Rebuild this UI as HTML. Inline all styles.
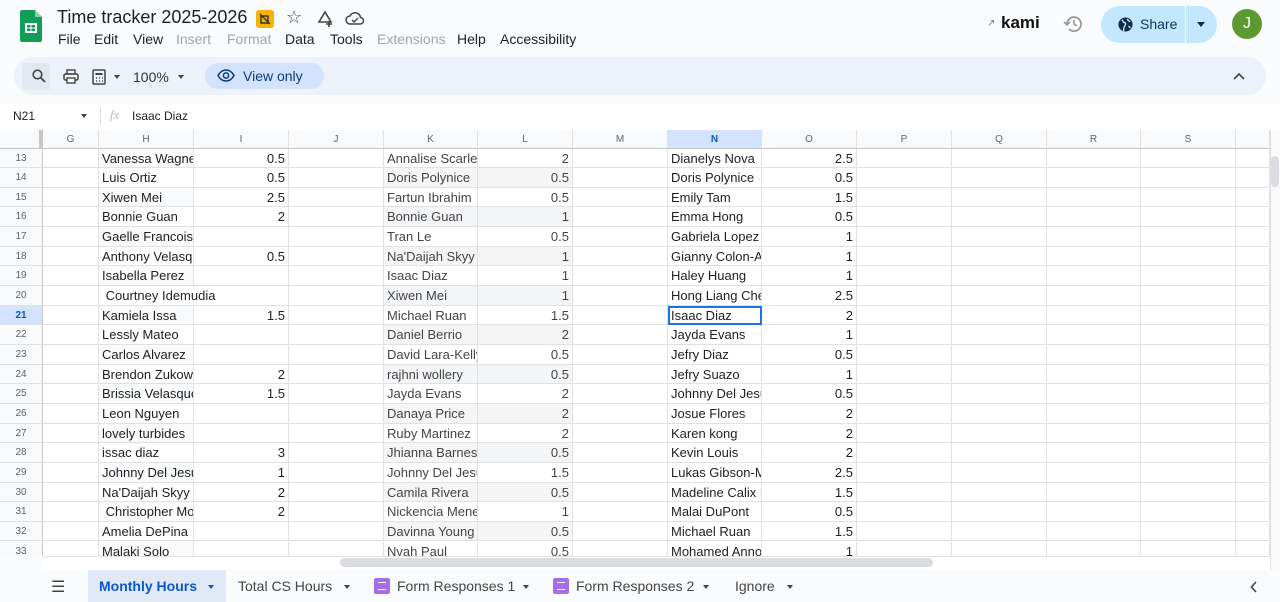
<!DOCTYPE html>
<html><head><meta charset="utf-8"><style>
*{box-sizing:border-box;margin:0;padding:0}
body{width:1280px;height:602px;overflow:hidden;background:#f9fbfd;font-family:"Liberation Sans",Arial,sans-serif;position:relative;color:#1f1f1f}
.abs{position:absolute}
.menu span{position:absolute;top:31px;font-size:14px;color:#1f1f1f}
.menu span.dis{color:#a0a3a8}
.grid{position:absolute;left:0;top:130px;width:1270px;height:426px;background:#fff;overflow:hidden}
.hdr{position:absolute;top:0;height:19px;border-bottom:1px solid #c7c7c7;border-right:1px solid #e1e1e1;font-size:10px;color:#5f6368;text-align:center;line-height:19px;background:#f8f9fa}
.row{position:absolute;left:0;height:19.65px;width:1270px}
.c{position:absolute;top:0;height:100%;border-right:1px solid #e1e1e1;border-bottom:1px solid #e1e1e1;font-size:13px;line-height:19px;padding:0 3px;white-space:nowrap;overflow:hidden;color:#1f1f1f}
.r{text-align:right}
.rn{left:0;width:43px;background:#f8f9fa;color:#5f6368;font-size:10px;text-align:center;border-right:1px solid #c7c7c7}
.k{color:#444}
.sh{background:#f4f5f7}
.sh2{background:#f9fafb}
.tab{position:absolute;top:570px;height:32px;font-size:14px;line-height:32px;color:#444}
</style></head><body>
<!-- logo -->
<svg class="abs" style="left:20px;top:10px" width="22" height="32" viewBox="0 0 22 32"><path d="M2 0h13l7 7v23a2 2 0 0 1-2 2H2a2 2 0 0 1-2-2V2a2 2 0 0 1 2-2z" fill="#0f9d58"/><path d="M15 0l7 7h-7z" fill="#87ceac"/><rect x="5" y="13" width="12" height="10" fill="#fff"/><rect x="7" y="15" width="3.5" height="2.5" fill="#0f9d58"/><rect x="11.5" y="15" width="3.5" height="2.5" fill="#0f9d58"/><rect x="7" y="18.5" width="3.5" height="2.5" fill="#0f9d58"/><rect x="11.5" y="18.5" width="3.5" height="2.5" fill="#0f9d58"/></svg>
<div class="abs" style="left:57px;top:7px;font-size:18px;color:#1f1f1f">Time tracker 2025-2026</div>
<div class="abs" style="left:256px;top:10px;width:18px;height:18px;background:#f6b400;border-radius:3px"></div>
<svg class="abs" style="left:259px;top:13px" width="12" height="12" viewBox="0 0 12 12"><path d="M1 1l10 10M2 3h7v7H2z" stroke="#333" stroke-width="1.4" fill="none"/></svg>
<div class="abs" style="left:286px;top:7px;font-size:18px;color:#444">☆</div>
<svg class="abs" style="left:316px;top:10px" width="18" height="18" viewBox="0 0 18 18"><path d="M9 2l6 10H3z" fill="none" stroke="#444" stroke-width="1.6"/><path d="M13 11v6M10 14h6" stroke="#444" stroke-width="1.6"/></svg>
<svg class="abs" style="left:345px;top:11px" width="20" height="14" viewBox="0 0 20 14"><path d="M5 13a4 4 0 0 1 0-8 5.5 5.5 0 0 1 10.5 1.5A3.2 3.2 0 0 1 15 13z" fill="none" stroke="#444" stroke-width="1.5"/><path d="M7 9l2 2 4-4" fill="none" stroke="#444" stroke-width="1.4"/></svg>
<div class="menu"><span style="left:58px">File</span><span style="left:94px">Edit</span><span style="left:133px">View</span><span class="dis" style="left:176px">Insert</span><span class="dis" style="left:227px">Format</span><span style="left:285px">Data</span><span style="left:330px">Tools</span><span class="dis" style="left:377px">Extensions</span><span style="left:457px">Help</span><span style="left:500px">Accessibility</span></div>
<!-- right -->
<div class="abs" style="left:987px;top:18px;font-size:10px;color:#777">↗</div>
<div class="abs" style="left:1001px;top:13px;font-size:17px;font-weight:bold;color:#111">kami</div>
<svg class="abs" style="left:1063px;top:13px" width="22" height="22" viewBox="0 0 22 22"><path d="M4 11a7 7 0 1 1 2 5" fill="none" stroke="#999" stroke-width="1.8"/><path d="M1 9l3 3 3-3" fill="none" stroke="#999" stroke-width="1.6"/><path d="M11 7v4l3 2" fill="none" stroke="#999" stroke-width="1.6"/></svg>
<div class="abs" style="left:1101px;top:6px;width:116px;height:37px;border-radius:19px;background:#c2e7ff"></div>
<div class="abs" style="left:1185px;top:6px;width:1px;height:37px;background:#fff"></div>
<svg class="abs" style="left:1118px;top:17px" width="15" height="15" viewBox="0 0 16 16"><circle cx="8" cy="8" r="7.5" fill="#0b2d4a"/><path d="M4 3c2 1 1 3 3 3s1 3 0 4-1 3-1 5M10 2c0 2 2 2 3 3M11 10c1 0 2 1 2 2" stroke="#c2e7ff" stroke-width="1.5" fill="none"/></svg>
<div class="abs" style="left:1140px;top:16px;font-size:14px;color:#0b3557;font-weight:500">Share</div>
<div class="abs" style="left:1197px;top:22px;border:4px solid transparent;border-top:5px solid #0b2d4a"></div>
<div class="abs" style="left:1232px;top:9px;width:30px;height:30px;border-radius:50%;background:#5c9930;color:#fff;font-size:16px;text-align:center;line-height:30px">J</div>
<!-- toolbar -->
<div class="abs" style="left:14px;top:57px;width:1252px;height:38px;border-radius:19px;background:#edf2fa"></div>
<div class="abs" style="left:22px;top:63px;width:28px;height:27px;background:#e3e8f0;border-radius:3px"></div>
<svg class="abs" style="left:32px;top:69px" width="14" height="14" viewBox="0 0 14 14"><circle cx="5.5" cy="5.5" r="4.3" fill="none" stroke="#444" stroke-width="1.6"/><path d="M8.5 8.5L13 13" stroke="#444" stroke-width="1.8"/></svg>
<svg class="abs" style="left:63px;top:69px" width="16" height="15" viewBox="0 0 16 15"><rect x="1" y="5" width="14" height="6" rx="1.5" fill="none" stroke="#444" stroke-width="1.5"/><rect x="4" y="1" width="8" height="4" fill="none" stroke="#444" stroke-width="1.4"/><rect x="4" y="9" width="8" height="5" fill="#fff" stroke="#444" stroke-width="1.4"/></svg>
<svg class="abs" style="left:92px;top:69px" width="14" height="16" viewBox="0 0 14 16"><rect x="1" y="1" width="12" height="14" rx="1" fill="none" stroke="#444" stroke-width="1.5"/><rect x="3.5" y="4" width="7" height="2" fill="#444"/><path d="M4 9h1M7 9h1M10 9h1M4 12h1M7 12h1M10 12h1" stroke="#444" stroke-width="1.5"/></svg>
<div class="abs" style="left:114px;top:75px;border:3.5px solid transparent;border-top:4px solid #444"></div>
<div class="abs" style="left:133px;top:69px;font-size:14px;color:#333">100%</div>
<div class="abs" style="left:178px;top:75px;border:3.5px solid transparent;border-top:4px solid #444"></div>
<div class="abs" style="left:205px;top:63px;width:119px;height:26px;border-radius:13px;background:#d3e3fd"></div>
<svg class="abs" style="left:217px;top:69px" width="18" height="13" viewBox="0 0 18 13"><path d="M1 6.5C3.5 2 6 1 9 1s5.5 1 8 5.5C14.5 11 12 12 9 12S3.5 11 1 6.5z" fill="none" stroke="#0b3b80" stroke-width="1.5"/><circle cx="9" cy="6.5" r="2.6" fill="none" stroke="#0b3b80" stroke-width="1.5"/></svg>
<div class="abs" style="left:243px;top:68px;font-size:14px;color:#0b3b80;font-weight:500">View only</div>
<svg class="abs" style="left:1233px;top:72px" width="12" height="8" viewBox="0 0 12 8"><path d="M1 7l5-5 5 5" fill="none" stroke="#444" stroke-width="1.6"/></svg>
<!-- formula bar -->
<div class="abs" style="left:0;top:104px;width:1280px;height:26px;background:#fff"></div>
<div class="abs" style="left:13px;top:109px;font-size:12px;color:#1f1f1f">N21</div>
<div class="abs" style="left:81px;top:114px;border:3.5px solid transparent;border-top:4px solid #444"></div>
<div class="abs" style="left:100px;top:108px;width:1px;height:16px;background:#ddd"></div>
<div class="abs" style="left:110px;top:107px;font-size:13px;color:#bbb;font-style:italic;font-family:'Liberation Serif',serif">fx</div>
<div class="abs" style="left:132px;top:109px;font-size:12px;color:#1f1f1f">Isaac Diaz</div>
<!-- grid -->
<div class="grid">
<div class="hdr" style="left:0;width:43px;border-right:4px solid #c7c7c7;"></div>
<div class="hdr" style="left:43px;width:56px">G</div>
<div class="hdr" style="left:99px;width:95px">H</div>
<div class="hdr" style="left:194px;width:95px">I</div>
<div class="hdr" style="left:289px;width:95px">J</div>
<div class="hdr" style="left:384px;width:94px">K</div>
<div class="hdr" style="left:478px;width:95px">L</div>
<div class="hdr" style="left:573px;width:95px">M</div>
<div class="hdr" style="left:668px;width:94px;background:#d3e3fd;color:#0b57d0;font-weight:bold">N</div>
<div class="hdr" style="left:762px;width:95px">O</div>
<div class="hdr" style="left:857px;width:95px">P</div>
<div class="hdr" style="left:952px;width:95px">Q</div>
<div class="hdr" style="left:1047px;width:94px">R</div>
<div class="hdr" style="left:1141px;width:95px">S</div>
<div class="hdr" style="left:1236px;width:34px"></div>
<div id="rows"></div>
</div>
<script>
var d=[["Vanessa Wagne","0.5","Annalise Scarlet","2","Dianelys Nova","2.5"],["Luis Ortiz","0.5","Doris Polynice","0.5","Doris Polynice","0.5"],["Xiwen Mei","2.5","Fartun Ibrahim","0.5","Emily Tam","1.5"],["Bonnie Guan","2","Bonnie Guan","1","Emma Hong","0.5"],["Gaelle Francois","","Tran Le","0.5","Gabriela Lopez","1"],["Anthony Velasqu","0.5","Na'Daijah Skyy","1","Gianny Colon-Al","1"],["Isabella Perez","","Isaac Diaz","1","Haley Huang","1"],["\u00a0Courtney Idemudia","","Xiwen Mei","1","Hong Liang Che","2.5"],["Kamiela Issa","1.5","Michael Ruan","1.5","Isaac Diaz","2"],["Lessly Mateo","","Daniel Berrio","2","Jayda Evans","1"],["Carlos Alvarez","","David Lara-Kelly","0.5","Jefry Diaz","0.5"],["Brendon Zukows","2","rajhni wollery","0.5","Jefry Suazo","1"],["Brissia Velasque","1.5","Jayda Evans","2","Johnny Del Jesu","0.5"],["Leon Nguyen","","Danaya Price","2","Josue Flores","2"],["lovely turbides","","Ruby Martinez","2","Karen kong","2"],["issac diaz","3","Jhianna Barnes","0.5","Kevin Louis","2"],["Johnny Del Jesu","1","Johnny Del Jesu","1.5","Lukas Gibson-M","2.5"],["Na'Daijah Skyy l","2","Camila Rivera","0.5","Madeline Calix F","1.5"],["\u00a0Christopher Mol","2","Nickencia Mene","1","Malai DuPont","0.5"],["Amelia DePina","","Davinna Young","0.5","Michael Ruan","1.5"],["Malaki Solo","","Nvah Paul","0.5","Mohamed Annou","1"]];
var cols=[[43,56],[99,95],[194,95],[289,95],[384,94],[478,95],[573,95],[668,94],[762,95],[857,95],[952,95],[1047,94],[1141,95],[1236,34]];
var h="";
d.forEach(function(r,i){var n=13+i,odd=n%2==1;var top=18.5+i*19.65;
h+='<div class="row" style="top:'+top+'px">';
h+='<div class="c rn" style="'+(n==21?'background:#d3e3fd;color:#0b57d0;font-weight:bold;':'')+'">'+n+'</div>';
cols.forEach(function(c,j){var t="",cl="c",st="left:"+c[0]+"px;width:"+c[1]+"px;";
if(j==1){t=r[0];if(odd)cl+=" sh2";if(n==20){st+="overflow:visible;z-index:2;border-right-color:transparent;";}}
if(j==2){t=r[1];cl+=" r";}
if(j==4){t=r[2];cl+=" k";if(!odd)cl+=" sh";}
if(j==5){t=r[3];cl+=" r k";if(!odd)cl+=" sh";}
if(j==7){t=r[4];if(n==21)st+="outline:2px solid #1a73e8;outline-offset:-2px;";}
if(j==8){t=r[5];cl+=" r";}
h+='<div class="'+cl+'" style="'+st+'">'+t+'</div>';});
h+='</div>';});
document.getElementById("rows").innerHTML=h;
</script>
<!-- scrollbars -->
<div class="abs" style="left:1270px;top:130px;width:10px;height:440px;background:#f8f9fa;border-left:1px solid #e1e1e1"></div>
<div class="abs" style="left:1271px;top:156px;width:8px;height:31px;border-radius:4px;background:#dadce0"></div>
<div class="abs" style="left:43px;top:556px;width:1227px;height:14px;background:#fff;border-top:1px solid #e1e1e1"></div>
<div class="abs" style="left:340px;top:558px;width:593px;height:9px;border-radius:5px;background:#dadce0"></div>
<!-- tabs -->
<div class="abs" style="left:0;top:570px;width:1280px;height:32px;background:#f9fbfd"></div>
<div class="abs" style="left:51px;top:577px;font-size:16px;color:#444">☰</div>
<div class="abs" style="left:88px;top:570px;width:138px;height:32px;background:#e1e9f7"></div>
<div class="tab" style="left:99px;color:#0b57d0;font-weight:bold">Monthly Hours</div>
<div class="abs" style="left:208px;top:585px;border:3.5px solid transparent;border-top:4px solid #0b57d0"></div>
<div class="tab" style="left:238px">Total CS Hours</div>
<div class="abs" style="left:344px;top:585px;border:3.5px solid transparent;border-top:4px solid #444"></div>
<div class="abs" style="left:374px;top:578px;width:16px;height:16px;border-radius:2px;background:#a66ee5"></div>
<div class="abs" style="left:378px;top:582px;width:8px;height:8px;border-top:1.5px solid #fff;border-bottom:1.5px solid #fff"></div>
<div class="tab" style="left:397px">Form Responses 1</div>
<div class="abs" style="left:523px;top:585px;border:3.5px solid transparent;border-top:4px solid #444"></div>
<div class="abs" style="left:553px;top:578px;width:16px;height:16px;border-radius:2px;background:#a66ee5"></div>
<div class="abs" style="left:557px;top:582px;width:8px;height:8px;border-top:1.5px solid #fff;border-bottom:1.5px solid #fff"></div>
<div class="tab" style="left:576px">Form Responses 2</div>
<div class="abs" style="left:703px;top:585px;border:3.5px solid transparent;border-top:4px solid #444"></div>
<div class="tab" style="left:735px">Ignore</div>
<div class="abs" style="left:787px;top:585px;border:3.5px solid transparent;border-top:4px solid #444"></div>
<svg class="abs" style="left:1250px;top:581px" width="8" height="12" viewBox="0 0 8 12"><path d="M6 1L1.5 6 6 11" fill="none" stroke="#444" stroke-width="1.6"/></svg>
</body></html>
